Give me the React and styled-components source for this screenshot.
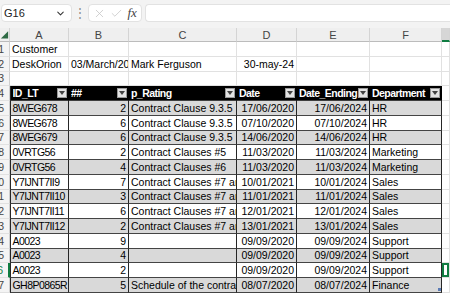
import styled, { createGlobalStyle } from "styled-components";
import { ChevronDown, X, Check } from "lucide-react";

const GlobalStyle = createGlobalStyle`
  html, body {
    margin: 0;
    padding: 0;
    background: #ffffff;
    overflow: hidden;
  }
  body {
    font-family: "Liberation Sans", Arial, sans-serif;
  }
`;

const Toolbar = styled.div`
  height: 28px;
  box-sizing: border-box;
  background: #f3f3f3;
  display: flex;
  align-items: flex-start;
  padding: 4px 0 0 1px;
`;

const NameBox = styled.div`
  width: 71px;
  height: 18px;
  box-sizing: border-box;
  background: #fff;
  border: 1px solid #e2e2e2;
  border-radius: 4px;
  display: flex;
  align-items: center;
  justify-content: space-between;
  padding: 0 5px 0 2px;
  font-size: 11px;
  color: #222;
`;

const Dots = styled.div`
  width: 16px;
  height: 18px;
  display: flex;
  align-items: center;
  justify-content: center;
  color: #8a8a8a;
  font-size: 12px;
`;

const FxBox = styled.div`
  width: 54px;
  height: 18px;
  box-sizing: border-box;
  background: #fff;
  border: 1px solid #e2e2e2;
  border-radius: 4px;
  display: flex;
  align-items: center;
  justify-content: space-around;
  padding: 0 2px;
`;

const FxLabel = styled.span`
  font-family: "Liberation Serif", "Times New Roman", serif;
  font-style: italic;
  font-size: 13px;
  color: #444;
`;

const FormulaInput = styled.div`
  flex: 1;
  height: 18px;
  margin-left: 3px;
  box-sizing: border-box;
  background: #fff;
  border: 1px solid #e2e2e2;
  border-right: none;
  border-radius: 4px 0 0 4px;
`;

const Sheet = styled.div`
  display: grid;
  grid-template-columns: 10px 59px 60px 108px 60px 73px 72px 1fr;
  grid-template-rows: 14px repeat(17, 14.75px);
  font-size: 10.5px;
  color: #000;
`;

const Corner = styled.div`
  background: #efefef;
  border-right: 1px solid #d4d4d4;
  border-bottom: 1px solid #bcbcbc;
  display: flex;
  align-items: flex-end;
  justify-content: flex-end;
  overflow: hidden;
`;

const ColHead = styled.div`
  box-sizing: border-box;
  background: ${(p) => (p.$active ? "#d6d6d6" : "#efefef")};
  border-right: 1px solid #d4d4d4;
  border-bottom: ${(p) => (p.$active ? "2px solid #107c41" : "1px solid #bcbcbc")};
  color: #444;
  font-size: 11px;
  display: flex;
  align-items: center;
  justify-content: center;
`;

const RowHead = styled.div`
  box-sizing: border-box;
  background: #f4f4f4;
  border-right: ${(p) => (p.$active ? "2px solid #107c41" : "1px solid #cfcfcf")};
  border-bottom: 1px solid #e1e1e1;
  color: ${(p) => (p.$active ? "#107c41" : "#444")};
  display: flex;
  align-items: center;
  justify-content: flex-end;
  padding-right: 5px;
  overflow: hidden;
  white-space: nowrap;
`;

const tones = {
  plain: { bg: "#fff", line: "#e1e1e1", bottom: "#e1e1e1", color: "#000" },
  head: { bg: "#000", line: "#000", bottom: "#3f3f3f", color: "#fff" },
  band: { bg: "#d9d9d9", line: "#262626", bottom: "#444", color: "#000" },
  white: { bg: "#fff", line: "#262626", bottom: "#444", color: "#000" },
};

const Cell = styled.div`
  position: relative;
  box-sizing: border-box;
  background: ${(p) => tones[p.$tone].bg};
  color: ${(p) => tones[p.$tone].color};
  font-weight: ${(p) => (p.$tone === "head" ? 700 : 400)};
  letter-spacing: ${(p) => (p.$tight ? "-0.55px" : "0")};
  border-right: 1px solid ${(p) => tones[p.$tone].line};
  border-bottom: 1px solid ${(p) => tones[p.$tone].bottom};
  border-left: ${(p) => (p.$edge ? "1px solid #262626" : "none")};
  box-shadow: ${(p) => (p.$selected ? "inset 0 0 0 2px #107c41" : "none")};
  display: flex;
  align-items: center;
  justify-content: ${(p) => (p.$align === "right" ? "flex-end" : "flex-start")};
  padding: 0 2px 0 ${(p) => (p.$edge ? "1.5px" : "2px")};
  overflow: hidden;
  white-space: nowrap;
`;

const Label = styled.span`
  flex: 1;
  min-width: 0;
  overflow: hidden;
`;

const Filter = styled.span`
  flex: none;
  width: 10px;
  height: 10px;
  box-sizing: border-box;
  margin-right: -1px;
  background: #e4e4e4;
  border: 1px solid #9a9a9a;
  display: flex;
  align-items: center;
  justify-content: center;
`;

const Handle = styled.span`
  position: absolute;
  right: 0;
  bottom: 1px;
  width: 3px;
  height: 3px;
  background: #5b7bb5;
`;

const heads = ["ID_LT", "##", "p_Rating", "Date", "Date_Ending", "Department"];
const tableAlign = ["left", "right", "left", "right", "right", "left"];

const data = [
  ["8WEG678", "2", "Contract Clause 9.3.5", "17/06/2020", "17/06/2024", "HR"],
  ["8WEG678", "6", "Contract Clause 9.3.5", "07/10/2020", "07/10/2024", "HR"],
  ["8WEG679", "6", "Contract Clause 9.3.5", "14/06/2020", "14/06/2024", "HR"],
  ["0VRTG56", "2", "Contract Clauses #5", "11/03/2020", "11/03/2024", "Marketing"],
  ["0VRTG56", "4", "Contract Clauses #6", "11/03/2020", "11/03/2024", "Marketing"],
  ["Y7IJNT7II9", "7", "Contract Clauses #7 and #8", "10/01/2021", "10/01/2024", "Sales"],
  ["Y7IJNT7II10", "3", "Contract Clauses #7 and #8", "11/01/2021", "11/01/2024", "Sales"],
  ["Y7IJNT7II11", "6", "Contract Clauses #7 and #8", "12/01/2021", "12/01/2024", "Sales"],
  ["Y7IJNT7II12", "2", "Contract Clauses #7 and #8", "13/01/2021", "13/01/2024", "Sales"],
  ["A0023", "9", "", "09/09/2020", "09/09/2024", "Support"],
  ["A0023", "4", "", "09/09/2020", "09/09/2024", "Support"],
  ["A0023", "2", "", "09/09/2020", "09/09/2024", "Support"],
  ["GH8P0865R", "5", "Schedule of the contract terms", "08/07/2020", "08/07/2024", "Finance"],
];

const plainRows = {
  1: ["Customer", "", "", "", "", ""],
  2: ["DeskOrion", "03/March/2024", "Mark Ferguson", "30-may-24", "", ""],
  3: ["", "", "", "", "", ""],
};
const plainAlign = ["left", "left", "left", "right", "left", "left"];

const FilterArrow = () => (
  <svg width="6" height="4" viewBox="0 0 6 4">
    <polygon points="0,0 6,0 3,4" fill="#444" />
  </svg>
);

const renderRow = (r) => {
  const active = r === 16;
  const cells = [];
  if (r <= 3) {
    plainRows[r].forEach((v, i) => {
      cells.push(
        <Cell key={`${r}-${i}`} $tone="plain" $align={plainAlign[i]}>
          {v}
        </Cell>
      );
    });
  } else if (r === 4) {
    heads.forEach((h, i) => {
      cells.push(
        <Cell key={`${r}-${i}`} $tone="head" $edge={i === 0} $tight>
          <Label>{h}</Label>
          <Filter>
            <FilterArrow />
          </Filter>
        </Cell>
      );
    });
  } else {
    const tone = r % 2 === 1 ? "band" : "white";
    data[r - 5].forEach((v, i) => {
      cells.push(
        <Cell
          key={`${r}-${i}`}
          $tone={tone}
          $align={tableAlign[i]}
          $edge={i === 0}
          $tight={i === 0}
        >
          {v}
          {r === 17 && i === 5 && <Handle />}
        </Cell>
      );
    });
  }
  return [
    <RowHead key={`h${r}`} $active={active}>
      {r}
    </RowHead>,
    ...cells,
    <Cell key={`${r}-g`} $tone="plain" $selected={active} />,
  ];
};

export default function App() {
  const rows = Array.from({ length: 17 }, (_, i) => i + 1);
  return (
    <>
      <GlobalStyle />
      <Toolbar>
        <NameBox>
          G16
          <ChevronDown size={11} strokeWidth={2.2} color="#333" />
        </NameBox>
        <Dots>⋮</Dots>
        <FxBox>
          <X size={13} strokeWidth={1.4} color="#c4c4c4" />
          <Check size={13} strokeWidth={1.4} color="#c4c4c4" />
          <FxLabel>fx</FxLabel>
        </FxBox>
        <FormulaInput />
      </Toolbar>
      <Sheet>
        <Corner>
          <svg width="10" height="13" viewBox="0 0 10 13">
            <polygon points="1,11 9,3 9,11" fill="#2f6b45" />
          </svg>
        </Corner>
        {["A", "B", "C", "D", "E", "F"].map((c) => (
          <ColHead key={c}>{c}</ColHead>
        ))}
        <ColHead $active />
        {rows.map((r) => renderRow(r))}
      </Sheet>
    </>
  );
}
